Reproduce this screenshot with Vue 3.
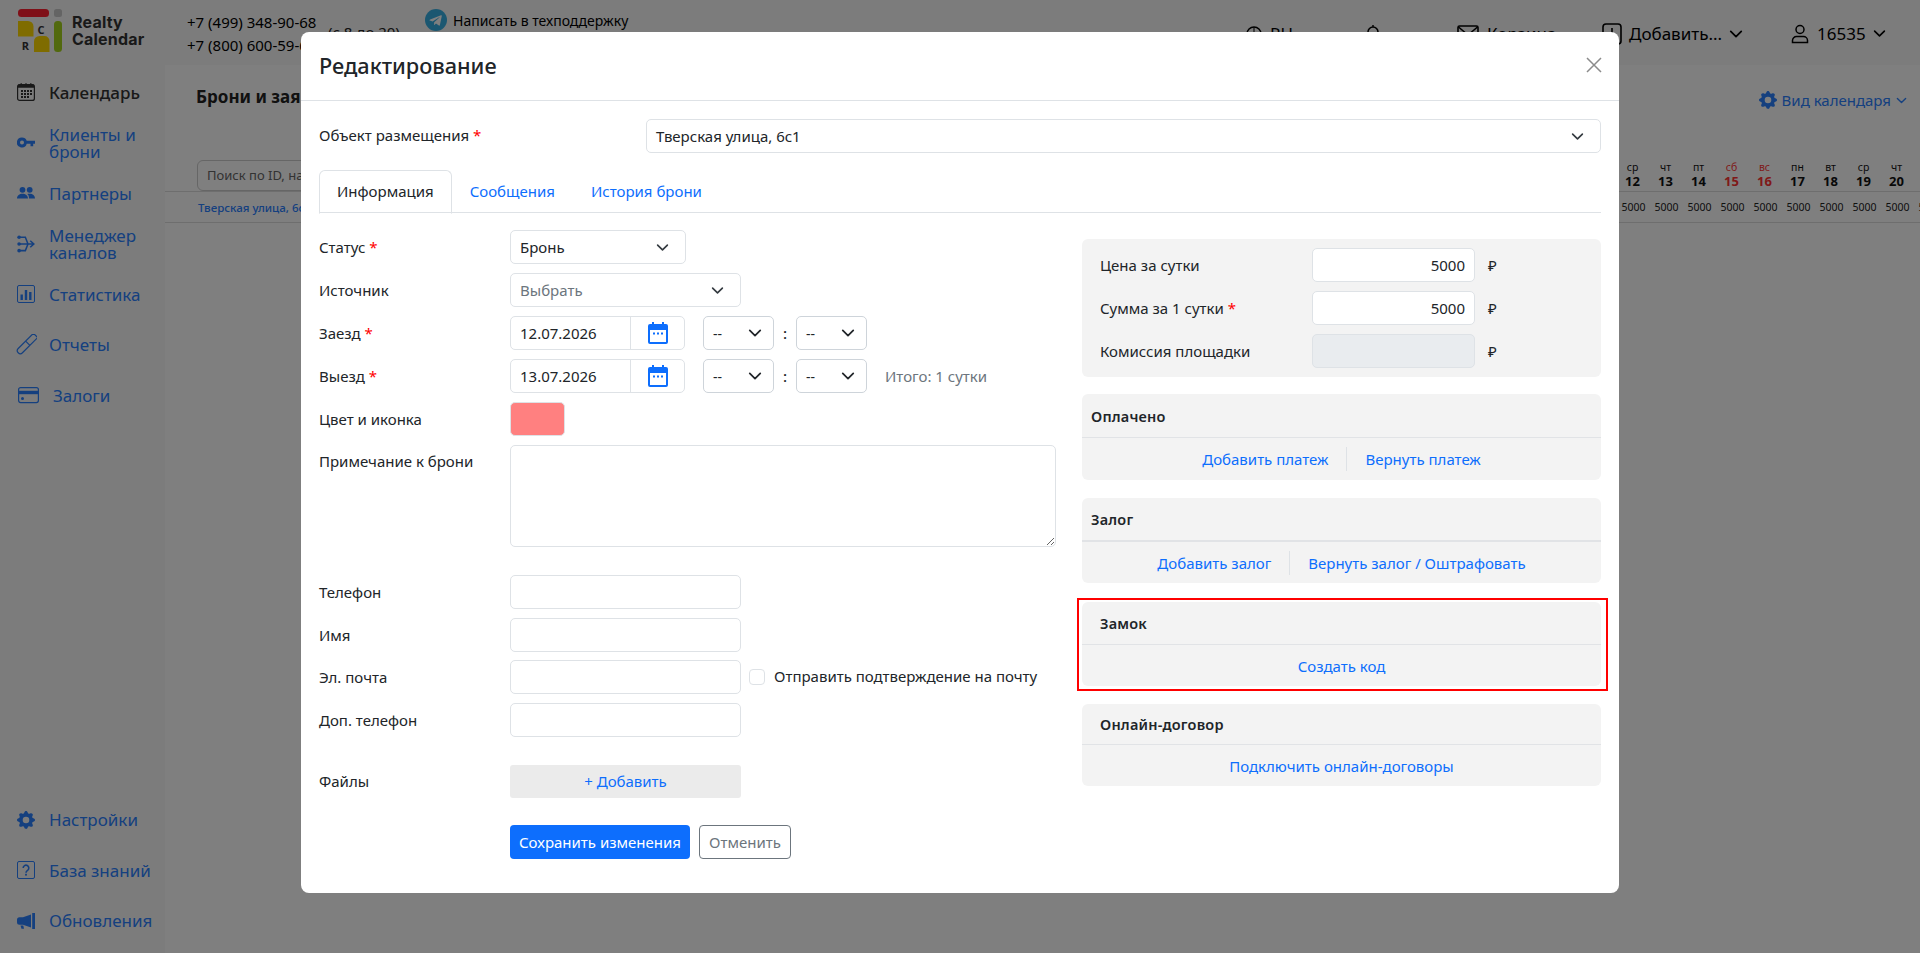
<script setup>
const navTop = [
  { id: 'i-cal', label: 'Календарь', active: true },
  { id: 'i-key', label: 'Клиенты и брони' },
  { id: 'i-people', label: 'Партнеры' },
  { id: 'i-usb', label: 'Менеджер каналов' },
  { id: 'i-chart', label: 'Статистика' },
  { id: 'i-tube', label: 'Отчеты', tube: true },
  { id: 'i-card', label: 'Залоги', wide: true },
]
const navBottom = [
  { id: 'i-gear', label: 'Настройки' },
  { id: 'i-help', label: 'База знаний' },
  { id: 'i-mega', label: 'Обновления' },
]
const days = [
  ['ср', 12], ['чт', 13], ['пт', 14], ['сб', 15, true], ['вс', 16, true],
  ['пн', 17], ['вт', 18], ['ср', 19], ['чт', 20],
]
const prices = [
  { label: 'Цена за сутки', value: '5000' },
  { label: 'Сумма за 1 сутки', value: '5000', req: true },
  { label: 'Комиссия площадки', value: '', disabled: true },
]
</script>

<template>
  <div class="page">
    <svg class="defs" width="0" height="0" aria-hidden="true">
      <defs>
        <symbol id="chev" viewBox="0 0 16 16"><path d="M2 5l6 6 6-6" fill="none" stroke="currentColor" stroke-width="2" stroke-linecap="round" stroke-linejoin="round"/></symbol>
        <symbol id="i-cal" viewBox="0 0 18 18"><rect x=".6" y="1.6" width="16.8" height="15.8" rx="2" fill="none" stroke="currentColor" stroke-width="1.2"/><path d="M1 1.6h16v3.2H1zM3.500.3h1.400v3H3.500zM8.300.3h1.400v3H8.300zM13.100.3h1.400v3h-1.400z" fill="currentColor"/><path d="M4 7h2v2H4zM7 7h2v2H7zM10 7h2v2h-2zM13 7h2v2h-2zM4 10h2v2H4zM7 10h2v2H7zM10 10h2v2h-2zM13 10h2v2h-2zM4 13h2v2H4zM7 13h2v2H7zM10 13h2v2h-2z" fill="currentColor"/></symbol>
        <symbol id="i-key" viewBox="0 0 18 18"><path d="M5 3.500a5 5 0 0 1 4.700 3.300H18v3h-1.800v2.400h-2.700V9.800H9.700A5 5 0 1 1 5 3.500zm0 3a2 2 0 1 0 0 4 2 2 0 0 0 0-4z" fill="currentColor" fill-rule="evenodd"/></symbol>
        <symbol id="i-people" viewBox="0 0 18 18"><circle cx="5.500" cy="5.800" r="2.900" fill="currentColor"/><circle cx="12.700" cy="5.800" r="2.900" fill="currentColor"/><path d="M0 14.500c0-3 2.500-4.800 5.500-4.800s5.500 1.800 5.500 4.800zM12 14.500c0-2-.5-3.500-1.800-4.400.8-.3 1.600-.4 2.500-.4 3 0 5.300 1.800 5.300 4.800z" fill="currentColor"/></symbol>
        <symbol id="i-usb" viewBox="0 0 19 18"><path d="M2 1.800h6.800l2.800 7.200-2.800 7H2M2 9h15.500M14 5.500L17.800 9 14 12.500" fill="none" stroke="currentColor" stroke-width="1.600"/><circle cx="2.200" cy="1.900" r="1.900" fill="currentColor"/><circle cx="2.200" cy="9" r="1.900" fill="currentColor"/><circle cx="2.200" cy="16" r="1.900" fill="currentColor"/></symbol>
        <symbol id="i-chart" viewBox="0 0 18 18"><rect x=".5" y=".5" width="17" height="17" rx="1.500" fill="none" stroke="currentColor"/><path d="M3.500 9.500h2.400v5.500H3.500zM7.800 5h2.400v10H7.800zM12.100 7h2.400v8h-2.400z" fill="currentColor"/></symbol>
        <symbol id="i-tube" viewBox="0 0 22 22"><g transform="rotate(45 11 11)" fill="none" stroke="currentColor" stroke-width="1.200"><path d="M7.500-2.500h7M8 -2.500V19a3 3 0 0 0 6 0V-2.500M8 8.500h6"/></g></symbol>
        <symbol id="i-card" viewBox="0 0 21 17"><rect x=".6" y=".6" width="19.800" height="15" rx="2" fill="none" stroke="currentColor" stroke-width="1.200"/><path d="M1 3.800h19v3.400H1z" fill="currentColor"/><rect x="3" y="10" width="3" height="3" rx="1.500" fill="currentColor"/></symbol>
        <symbol id="i-gear" viewBox="0 0 16 16"><path d="M9.405 1.050c-.413-1.400-2.397-1.400-2.810 0l-.1.340a1.464 1.464 0 0 1-2.105.872l-.31-.170c-1.283-.698-2.686.705-1.987 1.987l.169.311c.446.820.023 1.841-.872 2.105l-.34.100c-1.400.413-1.400 2.397 0 2.810l.34.100a1.464 1.464 0 0 1 .872 2.105l-.17.310c-.698 1.283.705 2.686 1.987 1.987l.311-.169a1.464 1.464 0 0 1 2.105.872l.1.340c.413 1.400 2.397 1.400 2.810 0l.1-.340a1.464 1.464 0 0 1 2.105-.872l.310.170c1.283.698 2.686-.705 1.987-1.987l-.169-.311a1.464 1.464 0 0 1 .872-2.105l.34-.100c1.400-.413 1.400-2.397 0-2.810l-.34-.100a1.464 1.464 0 0 1-.872-2.105l.17-.310c.698-1.283-.705-2.686-1.987-1.987l-.311.169a1.464 1.464 0 0 1-2.105-.872l-.1-.340zM8 10.930a2.929 2.929 0 1 1 0-5.860 2.929 2.929 0 0 1 0 5.858z" fill="currentColor"/></symbol>
        <symbol id="i-help" viewBox="0 0 18 18"><rect x=".5" y=".5" width="17" height="17" rx="1.500" fill="none" stroke="currentColor"/><path d="M6.200 7a2.800 2.800 0 1 1 4.400 2.300c-1 .7-1.600 1.100-1.600 2.400" fill="none" stroke="currentColor" stroke-width="1.600"/><rect x="8.100" y="12.800" width="1.800" height="1.800" fill="currentColor"/></symbol>
        <symbol id="i-mega" viewBox="0 0 18 16"><path d="M15.200 0H18v16h-2.800zM14 1.500v13L6 11.800H2.500A2.500 2.500 0 0 1 0 9.300V6.700a2.500 2.500 0 0 1 2.500-2.500H6zM3.500 12.500h2.800l.7 3.200H4.500z" fill="currentColor"/></symbol>
        <symbol id="i-date" viewBox="0 0 20 22"><path d="M4 0h2v3H4zM14 0h2v3h-2z" fill="currentColor"/><path fill-rule="evenodd" d="M2 2h16a2 2 0 0 1 2 2v16a2 2 0 0 1-2 2H2a2 2 0 0 1-2-2V4a2 2 0 0 1 2-2zm0 6v12h16V8z" fill="currentColor"/><path d="M5 10.500h2v2H5zM9 10.500h2v2H9zM13 10.500h2v2h-2z" fill="currentColor"/></symbol>
      </defs>
    </svg>

    <header class="top">
      <div class="logo">
        <svg width="44" height="44" viewBox="0 0 44 44">
          <rect x="0" y="0" width="31" height="8" rx="3.500" fill="#ff2030"/>
          <rect x="36" y="0" width="8" height="8" rx="2.500" fill="#c8c8c8"/>
          <path d="M0 12h10a5.500 5.500 0 0 1 5.500 5.500v10H0z" fill="#ffd900"/>
          <path d="M21.500 27h5a5 5 0 0 1 5 5v11H16V32.500a5.500 5.500 0 0 1 5.500-5.500z" fill="#ffd900"/>
          <rect x="36" y="12" width="8" height="31" rx="3.500" fill="#a5d21c"/>
          <text x="23" y="24.500" class="logo-letter">C</text>
          <text x="7.500" y="40.500" class="logo-letter">R</text>
        </svg>
        <div class="logo-text">Realty<br>Calendar</div>
      </div>
      <div class="phones">
        <div>+7 (499) 348-90-68</div>
        <div>+7 (800) 600-59-68</div>
      </div>
      <div class="hours">(с 8 до 20)</div>
      <div class="support">
        <svg width="22" height="22" viewBox="0 0 22 22"><circle cx="11" cy="11" r="11" fill="#37aee2"/><path d="M4.500 10.800l11.500-4.600c.6-.2 1 .1.800.9l-1.900 9c-.1.600-.5.800-1 .5l-2.900-2.100-1.400 1.300c-.2.200-.3.300-.6.300l.2-2.900 5.300-4.800c.2-.2 0-.3-.3-.1l-6.600 4.100-2.800-.9c-.6-.2-.6-.6.700-1.100z" fill="#fff"/></svg>
        <span>Написать в техподдержку</span>
      </div>
      <div class="top-right">
        <div class="top-item globe">
          <svg width="16" height="16" viewBox="0 0 16 16"><circle cx="8" cy="8" r="7" fill="none" stroke="currentColor" stroke-width="1.500"/><path d="M1 8h14M8 1v14" stroke="currentColor"/></svg>
          <span>RU</span>
        </div>
        <div class="top-item bell">
          <svg width="14" height="20" viewBox="0 0 14 20"><path d="M7 1v2M2 14V8a5 5 0 0 1 10 0v6l1.500 2H.5z" fill="none" stroke="currentColor" stroke-width="1.500"/></svg>
        </div>
        <div class="top-item cart">
          <svg width="22" height="18" viewBox="0 0 22 18"><rect x="1" y="1" width="20" height="16" rx="1.500" fill="none" stroke="currentColor" stroke-width="1.600"/><path d="M1.500 2l9.500 8 9.500-8" fill="none" stroke="currentColor" stroke-width="1.600"/></svg>
          <span>Корзина</span>
        </div>
        <div class="top-item add">
          <svg width="20" height="22" viewBox="0 0 20 22"><rect x="1" y="1" width="18" height="20" rx="3" fill="none" stroke="currentColor" stroke-width="1.600"/><path d="M10 5v7h4" fill="none" stroke="currentColor" stroke-width="1.600"/></svg>
          <span>Добавить...</span>
          <svg class="ch" width="14" height="14"><use href="#chev"/></svg>
        </div>
        <div class="top-item user">
          <svg width="20" height="20" viewBox="0 0 20 20"><circle cx="10" cy="5.500" r="4" fill="none" stroke="currentColor" stroke-width="1.500"/><path d="M2.500 18.500v-2a4 4 0 0 1 4-4h7a4 4 0 0 1 4 4v2z" fill="none" stroke="currentColor" stroke-width="1.500"/></svg>
          <span>16535</span>
          <svg class="ch" width="13" height="13"><use href="#chev"/></svg>
        </div>
      </div>
    </header>

    <div class="under">
      <aside class="side">
        <nav class="nav">
          <a v-for="n in navTop" :key="n.id" class="nav-item" :class="{ active: n.active, wide: n.wide, tube: n.tube }">
            <svg class="nav-ic"><use :href="'#' + n.id"/></svg>
            <span>{{ n.label }}</span>
          </a>
        </nav>
        <nav class="nav">
          <a v-for="n in navBottom" :key="n.id" class="nav-item">
            <svg class="nav-ic"><use :href="'#' + n.id"/></svg>
            <span>{{ n.label }}</span>
          </a>
        </nav>
      </aside>
      <main class="main">
        <div class="main-head">
          <h2>Брони и заявки</h2>
          <a class="view">
            <svg width="18" height="18"><use href="#i-gear"/></svg>
            <span>Вид календаря</span>
            <svg width="11" height="11"><use href="#chev"/></svg>
          </a>
        </div>
        <div class="cal-head">
          <div class="search">Поиск по ID, названию</div>
          <div class="cal-days">
            <div v-for="d in days" :key="d[1]" class="day" :class="{ weekend: d[2] }">
              <span class="dw">{{ d[0] }}</span><b>{{ d[1] }}</b>
            </div>
          </div>
        </div>
        <div class="cal-row">
          <a class="room">Тверская улица, 6с1</a>
          <div class="cal-days overflow">
            <div v-for="d in 10" :key="d" class="price-cell">5000</div>
          </div>
        </div>
      </main>
    </div>

    <div class="overlay">
      <section class="modal">
        <div class="m-head">
          <h1>Редактирование</h1>
          <svg class="close" width="16" height="16" viewBox="0 0 16 16"><path d="M1 1l14 14M15 1L1 15" stroke="#8b8b8b" stroke-width="1.500" fill="none"/></svg>
        </div>
        <div class="m-body">
          <div class="object-row">
            <label>Объект размещения <i>*</i></label>
            <div class="sel grow"><span>Тверская улица, 6с1</span><svg width="13" height="13"><use href="#chev"/></svg></div>
          </div>
          <div class="tabs">
            <a class="tab active">Информация</a>
            <a class="tab">Сообщения</a>
            <a class="tab">История брони</a>
          </div>
          <div class="cols">
            <div class="left">
              <div class="row">
                <label>Статус <i>*</i></label>
                <div class="sel w-status"><span>Бронь</span><svg width="13" height="13"><use href="#chev"/></svg></div>
              </div>
              <div class="row">
                <label>Источник</label>
                <div class="sel w-full muted"><span>Выбрать</span><svg width="13" height="13"><use href="#chev"/></svg></div>
              </div>
              <div class="row">
                <label>Заезд <i>*</i></label>
                <div class="date"><span>12.07.2026</span><div class="date-btn"><svg width="20" height="22"><use href="#i-date"/></svg></div></div>
                <div class="time"><span>--</span><svg width="14" height="14"><use href="#chev"/></svg></div>
                <span class="colon">:</span>
                <div class="time"><span>--</span><svg width="14" height="14"><use href="#chev"/></svg></div>
              </div>
              <div class="row">
                <label>Выезд <i>*</i></label>
                <div class="date"><span>13.07.2026</span><div class="date-btn"><svg width="20" height="22"><use href="#i-date"/></svg></div></div>
                <div class="time"><span>--</span><svg width="14" height="14"><use href="#chev"/></svg></div>
                <span class="colon">:</span>
                <div class="time"><span>--</span><svg width="14" height="14"><use href="#chev"/></svg></div>
                <span class="total">Итого: 1 сутки</span>
              </div>
              <div class="row">
                <label>Цвет и иконка</label>
                <div class="swatch"></div>
              </div>
              <div class="row top-al">
                <label>Примечание к брони</label>
                <textarea class="note"></textarea>
              </div>
              <div class="row spaced">
                <label>Телефон</label>
                <input class="inp" type="text">
              </div>
              <div class="row tight">
                <label>Имя</label>
                <input class="inp" type="text">
              </div>
              <div class="row">
                <label>Эл. почта</label>
                <input class="inp" type="text">
                <span class="check"></span>
                <span class="check-label">Отправить подтверждение на почту</span>
              </div>
              <div class="row">
                <label>Доп. телефон</label>
                <input class="inp" type="text">
              </div>
              <div class="row files">
                <label>Файлы</label>
                <div class="add-file">+ Добавить</div>
              </div>
              <div class="actions">
                <button class="btn primary">Сохранить изменения</button>
                <button class="btn ghost">Отменить</button>
              </div>
            </div>

            <div class="right">
              <div class="panel prices">
                <div v-for="p in prices" :key="p.label" class="price-row">
                  <label>{{ p.label }} <i v-if="p.req">*</i></label>
                  <input class="price" :class="{ dis: p.disabled }" :value="p.value" :disabled="p.disabled" type="text">
                  <span class="rub">₽</span>
                </div>
              </div>
              <div class="panel h-pay">
                <div class="p-title tight-title">Оплачено</div>
                <div class="p-links"><a>Добавить платеж</a><span class="sep"></span><a>Вернуть платеж</a></div>
              </div>
              <div class="panel h-dep">
                <div class="p-title tight-title thick">Залог</div>
                <div class="p-links"><a>Добавить залог</a><span class="sep"></span><a>Вернуть залог / Оштрафовать</a></div>
              </div>
              <div class="panel h-lock">
                <div class="p-title">Замок</div>
                <div class="p-links"><a>Создать код</a></div>
                <div class="red-frame"></div>
              </div>
              <div class="panel h-online">
                <div class="p-title">Онлайн-договор</div>
                <div class="p-links"><a>Подключить онлайн-договоры</a></div>
              </div>
            </div>
          </div>
        </div>
      </section>
    </div>
  </div>
</template>

<style>
html, body { margin: 0; padding: 0; overflow: hidden; }
</style>

<style scoped>
.page {
  width: 1920px; height: 953px; position: relative; overflow: hidden;
  background: #f8f8f8; color: #212529;
  font-family: "Noto Sans", "Open Sans", sans-serif; font-size: 15px;
}
.defs { position: absolute; }
a { color: #0d6efd; text-decoration: none; }

/* under layer */
.top { height: 65px; display: flex; align-items: flex-start; color: #000; }
.logo { width: 187px; padding: 9px 0 0 18px; box-sizing: border-box; display: flex; gap: 10px; flex: none; }
.logo-letter { font: 700 11px "Open Sans", sans-serif; fill: #333; text-anchor: middle; }
.logo-text { font: 700 16px/17px Inter, sans-serif; color: #333; padding-top: 5px; letter-spacing: .2px; }
.phones { width: 141px; flex: none; padding-top: 11px; font-size: 15px; line-height: 23px; }
.hours { padding-top: 22px; font-size: 15px; width: 97px; flex: none; color: #222; }
.support { display: flex; align-items: center; gap: 6px; padding-top: 9px; font-size: 14px; }
.top-right { margin-left: auto; width: 674px; flex: none; display: flex; }
.top-item { display: flex; align-items: center; gap: 6px; font-size: 17px; padding-top: 22px; flex: none; box-sizing: border-box; }
.globe { width: 120px; gap: 8px; }
.bell { width: 91px; }
.cart { width: 145px; gap: 8px; }
.add { width: 188px; gap: 7px; }
.user { width: 130px; gap: 7px; }
.under { display: flex; height: 888px; }
.side { width: 165px; flex: none; display: flex; flex-direction: column; justify-content: space-between; padding: 2px 0 7px; box-sizing: border-box; }
.nav-item { height: 50.500px; display: flex; align-items: center; gap: 14px; padding-left: 17px; font-size: 17px; line-height: 17px; color: #2a80ff; }
.nav-item.active { color: #333; font-weight: 500; }
.nav-item.wide { gap: 14px; padding-left: 18px; }
.nav-ic { width: 18px; height: 18px; flex: none; }
.wide .nav-ic { width: 21px; height: 17px; }
.tube .nav-ic { width: 22px; height: 22px; margin: 0 -2px 0 -2px; }
.main { flex: 1; background: #fff; overflow: hidden; min-width: 0; }
.main-head { height: 71px; display: flex; justify-content: space-between; padding: 21px 13px 0 31px; box-sizing: border-box; }
.main-head h2 { margin: 0; font-size: 17px; font-weight: 700; color: #222; line-height: 22px; }
.view { display: flex; align-items: center; gap: 5px; height: 28px; color: #2a80ff; font-size: 15px; }
.cal-head { height: 55px; display: flex; justify-content: space-between; border-bottom: 1px solid #ddd; }
.search { margin: 24px 0 0 32px; width: 160px; height: 31px; border: 1px solid #ccc; border-radius: 6px; box-sizing: border-box; padding-left: 9px; font-size: 13px; line-height: 29px; color: #666; white-space: nowrap; overflow: hidden; }
.cal-days { display: flex; padding-right: 7px; }
.cal-days.overflow { padding: 0; margin-right: -27px; }
.day { width: 33px; padding-top: 25px; display: flex; flex-direction: column; align-items: center; font-size: 10.500px; line-height: 13px; color: #111; }
.day b { font-size: 13px; line-height: 15px; }
.weekend { color: #f33; }
.cal-row { height: 30px; display: flex; justify-content: space-between; align-items: center; border-bottom: 1px solid #ddd; }
.room { font-size: 11.500px; font-weight: 500; margin-left: 33px; color: #2a80ff; }
.price-cell { width: 33px; text-align: center; font-size: 10.500px; color: #222; }

/* overlay and modal */
.overlay { position: fixed; inset: 0; background: rgba(0,0,0,.5); display: flex; justify-content: center; align-items: flex-start; }
.modal { width: 1318px; margin-top: 32px; background: #fff; border-radius: 8px; color: #212529; }
.m-head { height: 68px; border-bottom: 1px solid #dee2e6; display: flex; align-items: center; justify-content: space-between; padding: 0 17px 0 18px; }
.m-head h1 { margin: 0; font-size: 21.700px; font-weight: 500; line-height: 26px; }
.close { margin-top: -3px; }
.m-body { padding: 18px 18px 34px; }
label { flex: none; color: #212529; line-height: 20px; margin-top: -1px; }
label i { color: #f00; font-style: normal; }
.object-row { display: flex; align-items: center; height: 34px; }
.object-row label { width: 327px; margin-top: -2px; }
.sel { height: 34px; box-sizing: border-box; border: 1px solid #dee2e6; border-radius: 5px; display: flex; align-items: center; justify-content: space-between; padding: 0 16px 0 9px; background: #fff; }
.sel svg { color: #343a40; }
.grow { flex: 1; }
.w-status { width: 176px; }
.w-full { width: 231px; }
.muted { color: #6c757d; }
.tabs { display: flex; height: 42px; margin-top: 17px; border-bottom: 1px solid #dee2e6; }
.tab { padding: 0 18px; line-height: 42px; }
.tab.active { color: #212529; border: 1px solid #dee2e6; border-bottom-color: #fff; border-radius: 6px 6px 0 0; height: 42px; padding: 0 17px; line-height: 40px; }
.cols { display: flex; gap: 26px; padding-top: 17px; }
.left { width: 737px; flex: none; }
.right { flex: 1; padding-top: 9px; display: flex; flex-direction: column; gap: 17px; }
.row { display: flex; align-items: center; min-height: 34px; margin-bottom: 9px; }
.row > label { width: 191px; }
.row.top-al { align-items: flex-start; margin-bottom: 28px; }
.row.top-al label { padding-top: 6px; margin-top: 0; }
.row.tight { margin-bottom: 8px; }
.date { width: 175px; height: 34px; box-sizing: border-box; border: 1px solid #dee2e6; border-radius: 5px; display: flex; align-items: center; justify-content: space-between; padding-left: 9px; }
.date-btn { width: 54px; height: 100%; border-left: 1px solid #dee2e6; box-sizing: border-box; display: flex; align-items: center; justify-content: center; color: #0d6efd; }
.time { width: 71px; height: 34px; box-sizing: border-box; border: 1px solid #ced4da; border-radius: 5px; display: flex; align-items: center; justify-content: space-between; padding: 0 11px 0 9px; margin-left: 18px; font-size: 14px; }
.time svg { color: #212529; }
.colon { width: 22px; text-align: center; font-weight: 500; }
.colon + .time { margin-left: 0; }
.total { margin-left: 18px; color: #6c757d; }
.swatch { width: 55px; height: 34px; box-sizing: border-box; border: 1px solid #dee2e6; border-radius: 5px; background: #ff8080; }
.note { width: 546px; height: 102px; box-sizing: border-box; border: 1px solid #dee2e6; border-radius: 5px; outline: 0; display: block; margin: 0; }
.inp { width: 231px; height: 34px; box-sizing: border-box; border: 1px solid #dee2e6; border-radius: 5px; outline: 0; padding: 0 9px; }
.check { width: 16px; height: 16px; box-sizing: border-box; border: 1px solid #dee2e6; border-radius: 4px; margin-left: 8px; flex: none; }
.check-label { margin-left: 9px; margin-top: -2px; }
.row.files { margin: 27px 0 0; }
.add-file { width: 231px; height: 33px; background: #ebebeb; border-radius: 3px; text-align: center; line-height: 33px; color: #0d6efd; }
.actions { padding: 27px 0 0 191px; display: flex; gap: 9px; }
.btn { height: 34px; border-radius: 4px; font: 15px "Noto Sans", sans-serif; padding: 0; cursor: pointer; }
.primary { width: 180px; border: 0; background: #0d6efd; color: #fff; }
.ghost { width: 92px; border: 1px solid #6c757d; background: #fff; color: #6c757d; }

.panel { background: #f3f3f3; border-radius: 6px; display: flex; flex-direction: column; position: relative; }
.prices { padding: 9px 0; gap: 9px; }
.price-row { display: flex; align-items: center; height: 34px; padding-left: 18px; }
.price-row label { width: 212px; }
.price { width: 163px; height: 34px; box-sizing: border-box; border: 1px solid #dee2e6; border-radius: 5px; text-align: right; padding: 0 9px; outline: 0; font: inherit; color: #212529; background: #fff; }
.price.dis { background: #e9ecef; }
.rub { margin-left: 13px; }
.p-title { height: 43px; flex: none; box-sizing: border-box; border-bottom: 1px solid #e1e3e6; display: flex; align-items: center; padding-left: 18px; font-size: 14.500px; font-weight: 600; letter-spacing: .2px; }
.tight-title { padding-left: 9px; height: 44px; }
.thick { border-bottom-width: 2px; }
.p-links { flex: 1; display: flex; align-items: center; justify-content: center; }
.sep { width: 1px; height: 24px; background: #dee2e6; margin: 0 18px; }
.h-pay { height: 86px; }
.h-dep { height: 85px; margin-top: 1px; }
.h-lock { height: 84px; margin-top: 2px; }
.h-online { height: 82px; margin-top: 1px; }
.h-online .p-title { height: 41px; }
.red-frame { position: absolute; inset: -4px -7px -5px -5px; border: 2px solid #f00; pointer-events: none; }
</style>
